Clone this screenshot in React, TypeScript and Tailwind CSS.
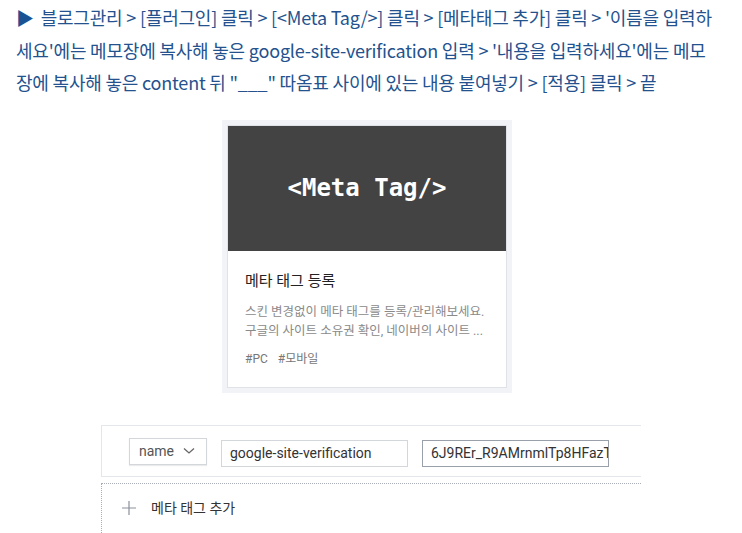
import React from "react";

export default function App() {
  return (
    <div className="w-[742px] h-[533px] overflow-hidden bg-white">
      <div
        className="pl-4 pt-[1px] text-[18px] tracking-[-0.2px] leading-[32.5px] text-[#24528e] whitespace-nowrap"
        style={{ fontFamily: '"Noto Sans CJK KR", "Noto Sans", sans-serif' }}
      >
        <div>
          <span className="text-[#1a5394] mr-[3px]">▶</span> 블로그관리 &gt; [플러그인] 클릭 &gt; [&lt;Meta Tag/&gt;] 클릭 &gt; [메타태그 추가] 클릭 &gt; '이름을 입력하
        </div>
        <div>세요'에는 메모장에 복사해 놓은 google-site-verification 입력 &gt; '내용을 입력하세요'에는 메모</div>
        <div>장에 복사해 놓은 content 뒤 "___" 따옴표 사이에 있는 내용 붙여넣기 &gt; [적용] 클릭 &gt; 끝</div>
      </div>

      <div className="mt-[21px] ml-[222px] w-[290px] bg-[#f1f3f6] p-[5px]">
        <div
          className="border border-[#dfe3e8] bg-white"
          style={{ fontFamily: 'Roboto, "Noto Sans CJK KR", sans-serif' }}
        >
          <div className="h-[125px] bg-[#434343] flex items-center justify-center">
            <span
              className="text-white text-[24px] font-bold"
              style={{ fontFamily: '"DejaVu Sans Mono", monospace' }}
            >
              &lt;Meta Tag/&gt;
            </span>
          </div>
          <div className="px-[17px] pt-[19px] pb-[19px]">
            <div className="text-[15px] leading-[22px] text-[#222]">메타 태그 등록</div>
            <div className="mt-[10px] text-[12.5px] leading-[19px] text-[#8a8a8a]">
              <div>스킨 변경없이 메타 태그를 등록/관리해보세요.</div>
              <div>구글의 사이트 소유권 확인, 네이버의 사이트 ...</div>
            </div>
            <div className="mt-[10px] text-[12px] leading-[18px] text-[#777] flex gap-[10px]">
              <span>#PC</span>
              <span>#모바일</span>
            </div>
          </div>
        </div>
      </div>

      <div
        className="mt-[32px] ml-[101px] w-[540px]"
        style={{ fontFamily: 'Roboto, "Noto Sans CJK KR", sans-serif' }}
      >
        <div className="h-[52px] border-t border-b border-l border-[#e3e6ea] flex items-start pl-[27px] pt-[12px] gap-[14px]">
          <div className="w-[78px] h-[27px] border border-[#d3d6db] shadow-[0_1px_1px_rgba(0,0,0,0.08)] flex items-center justify-between pl-[9px] pr-[11px] text-[14px] text-[#555]">
            <span>name</span>
            <svg width="12" height="8" viewBox="0 0 12 8" fill="none">
              <path d="M1 1.5 L6 6 L11 1.5" stroke="#666" strokeWidth="1.3" />
            </svg>
          </div>
          <div className="mt-[2px] w-[187px] h-[27px] border border-[#d3d6db] flex items-center pl-[8px] text-[14px] text-[#333] overflow-hidden whitespace-nowrap">
            google-site-verification
          </div>
          <div className="mt-[2px] w-[187px] h-[27px] border border-[#9aa0aa] flex items-center pl-[8px] text-[14px] text-[#333] overflow-hidden whitespace-nowrap">
            6J9REr_R9AMrnmlTp8HFazTxQ
          </div>
        </div>
        <div className="mt-[6px] h-[60px] border-t border-l border-dotted border-[#a9adb4] flex items-start pt-[13px] pl-[20px]">
          <svg width="14" height="14" viewBox="0 0 14 14" className="mt-[4px]">
            <path d="M7 0 V14 M0 7 H14" stroke="#8a8f99" strokeWidth="1.2" />
          </svg>
          <span className="ml-[15px] text-[14px] leading-[22px] text-[#333]">메타 태그 추가</span>
        </div>
      </div>
    </div>
  );
}
